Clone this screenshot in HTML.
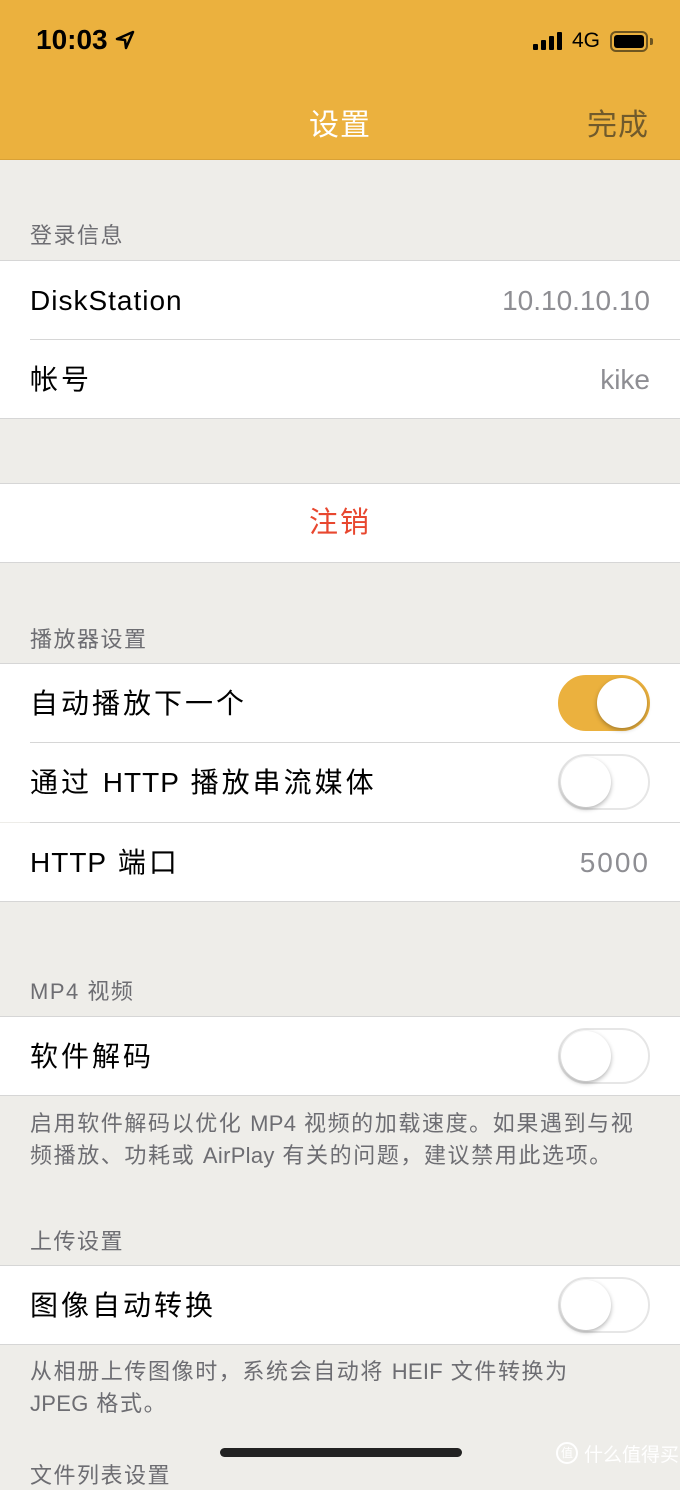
<!DOCTYPE html><html><head><meta charset="utf-8"><style>
*{margin:0;padding:0;box-sizing:border-box}
body{width:680px;height:1472px;overflow:hidden;background:#EEEDE9;font-family:"Liberation Sans","Noto Sans CJK SC",sans-serif;position:relative}
.a{position:absolute}
.hdr{left:0;top:0;width:680px;height:160px;background:#EBB13E;border-bottom:1px solid #d9a136}
.row{left:0;width:680px;height:79px;background:#fff}
.lbl{left:30px;font-size:28px;color:#000;line-height:79px;top:0;letter-spacing:3px;white-space:nowrap}
i{font-style:normal;letter-spacing:1px}
.val{right:30px;font-size:28px;color:#8e8e93;line-height:79px;top:0;letter-spacing:0}
.sep{height:1px;background:#d6d6d6}
.sec{left:30px;font-size:22px;color:#6d6d72;letter-spacing:1.5px}
.foot{left:30px;font-size:22px;color:#6d6d72;line-height:32px;width:640px;letter-spacing:1.6px;white-space:nowrap}
.foot i{letter-spacing:0.3px}
.tg{right:30px;top:11px;width:92px;height:56px;border-radius:28px;border:2px solid #e6e6e6;background:#fff}
.tg::after{content:"";position:absolute;left:1px;top:1px;width:50px;height:50px;border-radius:50%;background:#fff;box-shadow:0 2px 5px rgba(0,0,0,.3)}
.tg.on{background:#EBB13E;border-color:#EBB13E}
.tg.on::after{left:37px}
</style></head><body>
<div class="a hdr">
 <div class="a" style="left:36px;top:24px;font-size:28px;font-weight:bold">10:03</div>
 <svg class="a" style="left:115px;top:30px" width="20" height="20" viewBox="0 0 20 20"><path d="M18 2 L2 9 L10 10 L11 18 Z" fill="none" stroke="#000" stroke-width="2.5" stroke-linejoin="round"/></svg>
 <div class="a" style="left:533px;top:44px;width:5px;height:6px;background:#000;border-radius:1px"></div>
 <div class="a" style="left:541px;top:40px;width:5px;height:10px;background:#000;border-radius:1px"></div>
 <div class="a" style="left:549px;top:36px;width:5px;height:14px;background:#000;border-radius:1px"></div>
 <div class="a" style="left:557px;top:32px;width:5px;height:18px;background:#000;border-radius:1px"></div>
 <div class="a" style="left:572px;top:29px;font-size:21px">4G</div>
 <div class="a" style="left:610px;top:31px;width:38px;height:21px;border:2px solid #6e5520;border-radius:6px"><div style="margin:2px;width:30px;height:13px;background:#000;border-radius:3px"></div></div>
 <div class="a" style="left:650px;top:38px;width:3px;height:7px;background:#6e5520;border-radius:0 2px 2px 0"></div>
 <div class="a" style="left:0;width:680px;text-align:center;top:100px;font-size:30px;color:#fff;letter-spacing:1px">设置</div>
 <div class="a" style="right:31px;top:100px;font-size:30px;color:#705a2c;letter-spacing:1px">完成</div>
</div>
<div class="a sec" style="top:218px">登录信息</div>
<div class="a sep" style="top:260px;left:0;width:680px"></div>
<div class="a row" style="top:261px"><div class="a lbl"><i>DiskStation</i></div><div class="a val">10.10.10.10</div></div>
<div class="a sep" style="top:339px;left:30px;width:650px"></div>
<div class="a row" style="top:340px"><div class="a lbl">帐号</div><div class="a val">kike</div></div>
<div class="a sep" style="top:418px;left:0;width:680px"></div>
<div class="a sep" style="top:483px;left:0;width:680px"></div>
<div class="a row" style="top:484px"><div class="a" style="left:0;width:680px;text-align:center;font-size:29px;line-height:79px;color:#e8472f;letter-spacing:2px">注销</div></div>
<div class="a sep" style="top:562px;left:0;width:680px"></div>
<div class="a sec" style="top:622px">播放器设置</div>
<div class="a sep" style="top:663px;left:0;width:680px"></div>
<div class="a row" style="top:664px"><div class="a lbl">自动播放下一个</div><div class="a tg on"></div></div>
<div class="a sep" style="top:742px;left:30px;width:650px"></div>
<div class="a row" style="top:743px"><div class="a lbl">通过 <i>HTTP</i> 播放串流媒体</div><div class="a tg"></div></div>
<div class="a sep" style="top:822px;left:30px;width:650px"></div>
<div class="a row" style="top:823px"><div class="a lbl"><i>HTTP</i> 端口</div><div class="a val" style="letter-spacing:2px">5000</div></div>
<div class="a sep" style="top:901px;left:0;width:680px"></div>
<div class="a sec" style="top:974px">MP4 视频</div>
<div class="a sep" style="top:1016px;left:0;width:680px"></div>
<div class="a row" style="top:1017px"><div class="a lbl">软件解码</div><div class="a tg"></div></div>
<div class="a sep" style="top:1095px;left:0;width:680px"></div>
<div class="a foot" style="top:1108px">启用软件解码以优化 <i>MP4</i> 视频的加载速度。如果遇到与视<br>频播放、功耗或 <i>AirPlay</i> 有关的问题，建议禁用此选项。</div>
<div class="a sec" style="top:1224px">上传设置</div>
<div class="a sep" style="top:1265px;left:0;width:680px"></div>
<div class="a row" style="top:1266px"><div class="a lbl">图像自动转换</div><div class="a tg"></div></div>
<div class="a sep" style="top:1344px;left:0;width:680px"></div>
<div class="a foot" style="top:1356px">从相册上传图像时，系统会自动将 <i>HEIF</i> 文件转换为<br><i>JPEG</i> 格式。</div>
<div class="a sec" style="top:1458px">文件列表设置</div>
<div class="a" style="left:220px;top:1448px;width:242px;height:9px;border-radius:5px;background:#222"></div>
<div class="a" style="left:556px;top:1442px;width:22px;height:22px;border-radius:50%;border:2px solid #fff;color:#fff;font-size:12px;text-align:center;line-height:18px">值</div>
<div class="a" style="left:584px;top:1440px;font-size:19px;color:#fff;white-space:nowrap">什么值得买</div>
</body></html>
